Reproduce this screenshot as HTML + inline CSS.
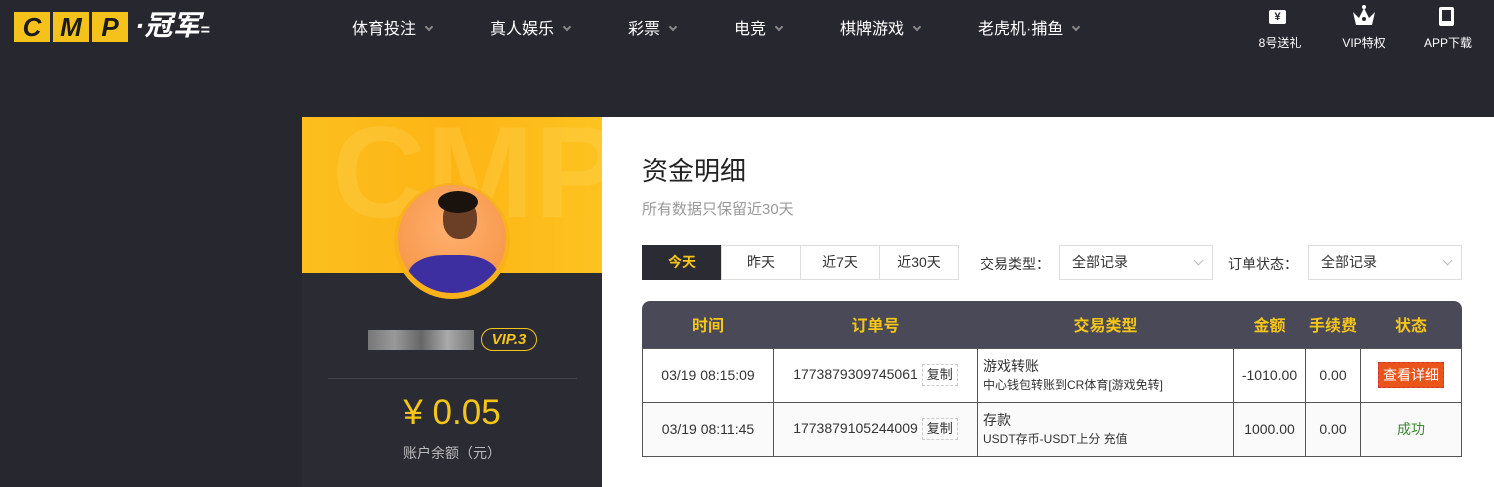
<!DOCTYPE html>
<html><head><meta charset="utf-8"><style>
*{margin:0;padding:0;box-sizing:border-box}
body{width:1494px;height:487px;background:#272730;font-family:"Liberation Sans","Noto Sans CJK SC",sans-serif;position:relative;overflow:hidden;color:#333}
.abs{position:absolute}
.nav{position:absolute;top:15px;font-size:16px;color:#fff}
.nav i{display:inline-block;width:6px;height:6px;border-right:2px solid #888;border-bottom:2px solid #888;transform:rotate(45deg);margin-left:10px;position:relative;top:-4px}
.ic{position:absolute;top:34px;font-size:12px;color:#fff;text-align:center;width:70px}
.logo span{display:inline-block;width:36px;height:30px;background:#f5c11b;color:#1a1a1a;font:italic 900 26px/30px "Liberation Sans",sans-serif;text-align:center;margin-right:3px}
.btn{position:absolute;top:245px;height:35px;border:1px solid #ddd;font-size:14px;line-height:33px;text-align:center;color:#333}
.sel{position:absolute;top:245px;height:35px;width:154px;border:1px solid #ddd;font-size:14px;line-height:33px;padding-left:12px;color:#333}
.sel:after{content:"";position:absolute;right:10px;top:11px;width:6px;height:6px;border-right:1px solid #bbb;border-bottom:1px solid #bbb;transform:rotate(45deg)}
table{position:absolute;left:642px;top:301px;width:820px;border-collapse:collapse;font-size:14px;color:#333}
th{color:#f5c518;height:47px;font-size:16px;font-weight:bold}
td{border:1px solid #555;height:54px;text-align:center}
.cp{display:inline-block;border:1px dashed #ccc;padding:0 4px;font-size:13px;line-height:20px;margin-left:4px}
</style></head><body>
<div class="abs logo" style="left:14px;top:12px"><span>C</span><span>M</span><span>P</span></div>
<div class="abs" style="left:135px;top:9px;color:#fff;font:italic bold 28px/34px 'Liberation Sans','Noto Sans CJK SC',sans-serif">·冠军<span style="font-size:16px">=</span></div>
<div class="nav" style="left:352px">体育投注<i></i></div>
<div class="nav" style="left:490px">真人娱乐<i></i></div>
<div class="nav" style="left:628px">彩票<i></i></div>
<div class="nav" style="left:734px">电竞<i></i></div>
<div class="nav" style="left:840px">棋牌游戏<i></i></div>
<div class="nav" style="left:978px">老虎机·捕鱼<i></i></div>
<div class="abs" style="left:1269px;top:10px;width:17px;height:14px;background:#fff;border-radius:2px;font-size:11px;line-height:14px;text-align:center;color:#272730;font-weight:bold">¥</div>
<svg class="abs" style="left:1351px;top:4px" width="26" height="22"><polygon points="2,8 8,14 13,4 18,14 24,8 21,21 5,21" fill="#fff"/><circle cx="13" cy="3" r="2" fill="#fff"/><circle cx="13" cy="15" r="2" fill="#272730"/></svg>
<div class="abs" style="left:1439px;top:7px;width:15px;height:19px;border:3px solid #fff;border-bottom-width:5px;border-radius:2px"></div>
<div class="ic" style="left:1245px">8号送礼</div>
<div class="ic" style="left:1329px">VIP特权</div>
<div class="ic" style="left:1413px">APP下载</div>

<div class="abs" style="left:302px;top:117px;width:300px;height:370px;background:#2b2b34"></div>
<div class="abs" style="left:302px;top:117px;width:300px;height:156px;background:linear-gradient(90deg,#fcbf1e,#fdb515 50%,#fdc320);overflow:hidden"><div style="position:absolute;left:30px;top:-10px;font:bold 130px/1 'Liberation Sans',sans-serif;color:rgba(255,225,120,.22)">CMP</div></div>
<div class="abs" style="left:394px;top:183px;width:116px;height:116px;border-radius:50%;background:#f9b21a"></div>
<div class="abs" style="left:398px;top:185px;width:108px;height:108px;border-radius:50%;background:radial-gradient(circle at 50% 40%,#ffb070,#f4903e);overflow:hidden">
<div style="position:absolute;left:45px;top:14px;width:34px;height:40px;border-radius:45%;background:#6b3f26"></div>
<div style="position:absolute;left:40px;top:6px;width:40px;height:22px;border-radius:50%;background:#1a120d"></div>
<div style="position:absolute;left:10px;top:70px;width:90px;height:50px;border-radius:40% 40% 0 0;background:#3d2fa0"></div></div>
<div class="abs" style="left:368px;top:330px;width:106px;height:20px;background:linear-gradient(90deg,#777,#999,#666,#aaa,#777)"></div>
<div class="abs" style="left:481px;top:328px;width:56px;height:23px;border:1px solid #f5c518;border-radius:12px;color:#f5c518;font:italic bold 15px/21px 'Liberation Sans',sans-serif;text-align:center">VIP.3</div>
<div class="abs" style="left:328px;top:378px;width:249px;height:1px;background:#44444e"></div>
<div class="abs" style="left:302px;top:393px;width:300px;text-align:center;color:#f5c518;font-size:35px">¥ 0.05</div>
<div class="abs" style="left:302px;top:443px;width:300px;text-align:center;color:#bbb;font-size:14px">账户余额（元）</div>

<div class="abs" style="left:602px;top:117px;width:892px;height:370px;background:#fff"></div>
<div class="abs" style="left:642px;top:151px;font-size:26px;color:#222">资金明细</div>
<div class="abs" style="left:642px;top:198px;font-size:15px;color:#999">所有数据只保留近30天</div>
<div class="btn" style="left:642px;width:80px;background:#2b2b34;color:#f5c518;border-color:#2b2b34;font-weight:bold">今天</div>
<div class="btn" style="left:721px;width:80px">昨天</div>
<div class="btn" style="left:800px;width:80px">近7天</div>
<div class="btn" style="left:879px;width:80px">近30天</div>
<div class="abs" style="left:980px;top:254px;font-size:14px">交易类型：</div>
<div class="sel" style="left:1059px">全部记录</div>
<div class="abs" style="left:1228px;top:254px;font-size:14px">订单状态：</div>
<div class="sel" style="left:1308px">全部记录</div>
<div class="abs" style="left:642px;top:301px;width:820px;height:47px;background:#4a4958;border-radius:8px 8px 0 0"></div>
<table>
<tr><th style="width:131px">时间</th><th style="width:204px">订单号</th><th style="width:256px">交易类型</th><th style="width:72px">金额</th><th style="width:55px">手续费</th><th>状态</th></tr>
<tr><td>03/19 08:15:09</td><td>1773879309745061<span class="cp">复制</span></td><td style="text-align:left;padding-left:5px;line-height:18px">游戏转账<br><span style="font-size:12px">中心钱包转账到CR体育[游戏免转]</span></td><td>-1010.00</td><td>0.00</td><td><span style="display:inline-block;background:#e9541a;color:#fff;border:1px dashed #c33;padding:2px 4px;line-height:20px">查看详细</span></td></tr>
<tr style="background:#fafafa"><td>03/19 08:11:45</td><td>1773879105244009<span class="cp">复制</span></td><td style="text-align:left;padding-left:5px;line-height:18px">存款<br><span style="font-size:12px">USDT存币-USDT上分 充值</span></td><td>1000.00</td><td>0.00</td><td style="color:#3a8a2e">成功</td></tr>
</table>
</body></html>
